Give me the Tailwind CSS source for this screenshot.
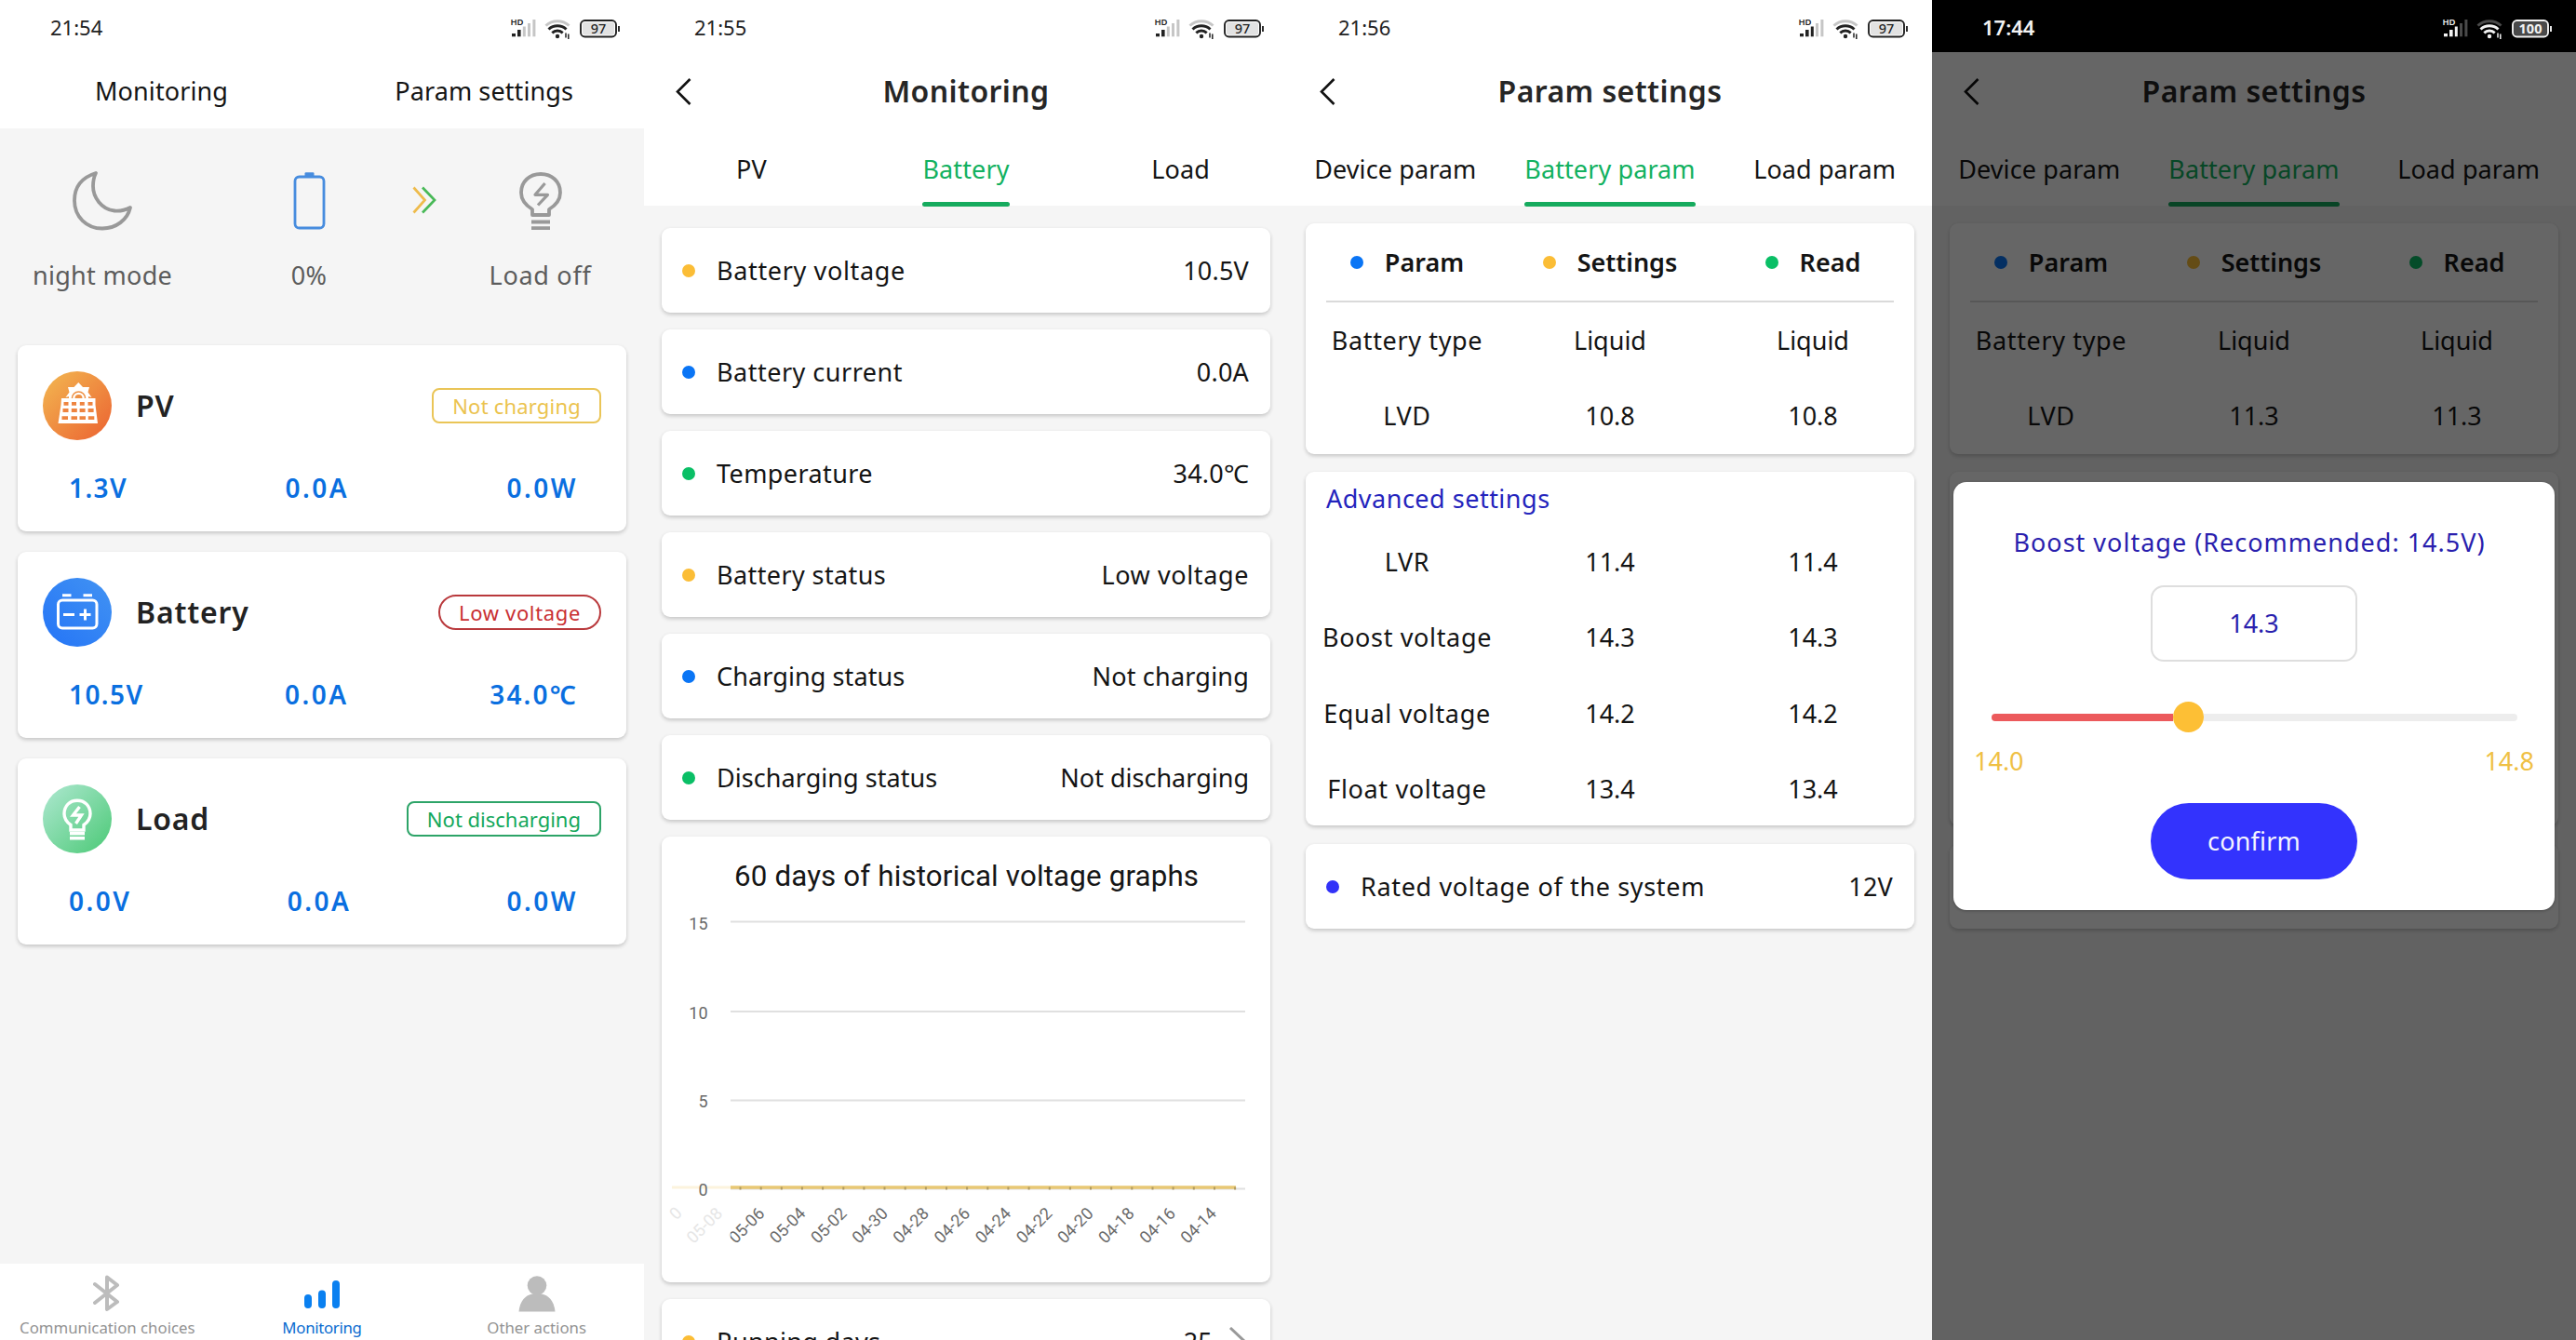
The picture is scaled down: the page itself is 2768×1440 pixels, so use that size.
<!DOCTYPE html>
<html lang="en">
<head>
<meta charset="utf-8">
<title>Solar controller app</title>
<script src="https://cdn.jsdelivr.net/npm/@tailwindcss/browser@4"></script>
</head>
<body class="bg-[#f5f5f5]">
<main id="app" class="grid h-[1440px] w-[2768px] grid-cols-4 overflow-hidden font-['Noto_Sans','Noto_Sans_CJK_SC',sans-serif] text-[27px] leading-9 text-[#141414]"></main>

<script>
/* ---------- shared pieces ---------- */
const statusBar = (time, battery, dark, bars) => {
  const fg = dark ? '#f2f2f2' : '#222', dim = dark ? '#4a4a4a' : '#c6c6c6';
  const signal = [[11, 26, 4], [17, 22, 3.6], [22.8, 18.5, 3], [28, 15, 3], [33.4, 11, 3]]
    .map(([x, y, w], i) => `<rect x="${x}" y="${y}" width="${w}" height="${29.3 - y}" fill="${i < bars ? fg : dim}"/>`).join('');
  return `<div class="flex h-14 shrink-0 items-center justify-between pt-1 pr-[23px] pl-[54px] ${dark ? 'bg-black font-semibold text-[#f2f2f2]' : 'bg-white text-[#222]'}">
    <span class="pb-0.5 text-[22px] leading-8">${time}</span>
    <svg class="h-10 w-[130px]" viewBox="0 0 130 40">
      <text x="9.500" y="16.800" font-size="9.500" font-weight="600" textLength="14" fill="${fg}">HD</text>
      ${signal}
      <g fill="none" stroke-width="3">
        <path d="M47.500 17.500a18.500 18.500 0 0 1 25 0" stroke="${dim}"/>
        <path d="M50.500 21.500a14 14 0 0 1 19 0" stroke="${fg}"/>
        <path d="M54.300 25.300a8.500 8.500 0 0 1 11.400 0" stroke="${fg}"/>
      </g>
      <circle cx="60" cy="29" r="2.200" fill="${fg}"/>
      <path d="M69 25.500v5M71.800 26.500v5.500" stroke="${fg}" stroke-width="1.500"/>
      <rect x="85" y="12" width="38" height="17.500" rx="4.500" fill="${dark ? '#444' : '#fff'}" stroke="${fg}" stroke-width="1.900"/>
      <rect x="87" y="14" width="34" height="13.500" rx="2.500" fill="${dark ? '#4a4a4a' : '#e2e2e2'}"/>
      <path d="M126 18v6" stroke="${fg}" stroke-width="1.900"/>
      <text x="104" y="26" text-anchor="middle" font-size="14.500" font-weight="${dark ? 700 : 500}" fill="${fg}">${battery}</text>
    </svg>
  </div>`;
};

const titleBar = title => `<div class="grid h-[82px] shrink-0 grid-cols-[60px_1fr_60px] items-center bg-white pt-0.5">
    <svg class="ml-[34px] h-[30px] w-[18px]" viewBox="0 0 18 30" fill="none" stroke="#111" stroke-width="2.600"><path d="M15.500 2L2 15.500L15.500 29"/></svg>
    <h1 class="text-center text-[32px] font-semibold tracking-[0.4px] text-[#262626]">${title}</h1>
  </div>`;

const tabs = (items, active) => `<nav class="grid h-[83px] shrink-0 grid-cols-3 justify-items-center bg-white tracking-[0.1px]">
    ${items.map((t, i) => `<span class="flex h-[84px] flex-col justify-between pt-[26px] ${i === active ? 'text-[#12b160]' : ''}">${t}${i === active ? '<i class="block h-[5px] rounded-full bg-[#16ab5e]"></i>' : ''}</span>`).join('')}
  </nav>`;

const card = (cls, body) => `<section class="mx-[19px] shrink-0 rounded-[9px] bg-white shadow-[0_2px_4px_rgba(0,0,0,0.2)] ${cls}">${body}</section>`;

const infoRow = (dot, label, value, spacing = 'tracking-[0.65px]') => `<div class="flex h-[91px] items-center justify-between pr-[23px] pl-[22px]">
    <span class="flex items-center gap-[23px] ${spacing}"><i class="size-[14px] rounded-full ${dot}"></i>${label}</span>
    <span class="flex items-center tracking-[0.2px]">${value}</span>
  </div>`;

const YELLOW = 'bg-[#fbbd36]', BLUE = 'bg-[#0a75f5]', GREEN = 'bg-[#0abf66]', INDIGO = 'bg-[#3232f8]';

/* ---------- screen 1: overview ---------- */
const bulb = `<path d="M572 231V225C564 220 560 214 560 207C560 195 569 187 581 187S602 195 602 207C602 214 598 220 590 225V231ZM571 238.500H591M571 245.200H591" stroke-width="3.800"/><path d="M585.600 197L575 209.300H588.500L578 220.500" stroke-width="3.200"/>`;

const gradient = (id, x1, x2, from, to) => `<linearGradient id="${id}" x1="${x1}" y1="0" x2="${x2}" y2="1"><stop offset=".1" stop-color="${from}"/><stop offset=".9" stop-color="${to}"/></linearGradient><circle cx="37" cy="37" r="37" fill="url(#${id})"/>`;

const icons = {
  pv: `${gradient('gOrange', 0, 1, '#f2b04e', '#ec6a34')}
    <path d="M28 31V27L24.500 28L28.500 22.500L27 17H33.500L38.300 12L43 17H50L48.500 22.500L52.500 28L49 27V31Z" fill="#fff"/>
    <path d="M31.500 29a7 7 0 0 1 14 0" fill="none" stroke="#ee9145" stroke-width="1.600"/>
    <path d="M20 29H56.500V36L59 56H16.500L19.500 36Z" fill="#fff"/>
    <path d="M34.500 29a4 4 0 0 1 8 0Z" fill="#ee9145"/>
    <path d="M22.500 34.800h5M31 34.800h5M39.800 34.800h5M48.500 34.800h5M21.500 42h6M30.800 42h6M39.600 42h6M48.600 42h6M20.500 50.200h6.500M30.500 50.200h6.500M39.500 50.200h6.500M48.800 50.200h6.500" stroke="#ee8440" stroke-width="3.800"/>`,
  battery: `${gradient('gBlue', 1, 0, '#3f90f3', '#2777f6')}<g fill="none" stroke="#fff" stroke-width="3"><rect x="16.500" y="24" width="41.500" height="30" rx="4.500"/><path d="M21 18.700h9.500M43.500 18.700h9.500M22 39.500h12M39.500 39.500h12M45.500 33.500v12"/></g>`,
  load: `${gradient('gGreen', 0, 1, '#a5e5c8', '#55cc7f')}<g fill="none" stroke="#fff" stroke-width="3.400"><path d="M30 49V43.500C25 40 23 36 23 31.500C23 23 29 17.200 37 17.200S51 23 51 31.500C51 36 49 40 44 43.500V49ZM29 52.800H45M29 57.700H45"/><path d="M39.500 24L32.500 33H41.500L35.500 42"/></g>`
};

const reading = v => `<span class="${v[0] === '1' ? 'tracking-[1.4px]' : v[0] === '3' ? 'tracking-[2.200px]' : 'tracking-[2.500px]'}">${v}</span>`;

const deviceCard = (icon, name, badge, badgeCls, values) => card('flex h-[200px] flex-col', `
    <div class="flex h-[130px] items-center px-[27px]">
      <svg class="size-[74px]" viewBox="0 0 74 74">${icon}</svg>
      <h2 class="ml-[26px] text-[32px] font-semibold tracking-[0.8px] text-[#222]">${name}</h2>
      <span class="ml-auto flex h-[38px] items-center border-2 px-5 text-[22px] ${badgeCls}">${badge}</span>
    </div>
    <div class="flex justify-between pt-[5px] pr-[52px] pl-[55px] text-[28px] font-semibold text-[#0a6fe0]">${values.map(reading).join('')}</div>`);

const screen1 = `<div class="flex flex-col overflow-hidden bg-[#f5f5f5]">
  ${statusBar('21:54', '97', false, 2)}
  <nav class="flex h-[82px] shrink-0 items-center justify-between bg-white pt-0.5 pr-[76px] pl-[102px] tracking-[0.1px]"><span>Monitoring</span><span>Param settings</span></nav>
  <div class="grid h-[233px] shrink-0 grid-cols-[220px_224px_25px_223px] justify-items-center pt-11 tracking-[0.3px] text-[#5c5c5c]">
    <div class="flex flex-col items-center gap-[29px]"><svg class="h-[67px] w-[66px]" viewBox="0 0 66 67" fill="none" stroke="#999" stroke-width="3.800" stroke-linejoin="round"><path d="M26 4C10 9 3 20 3 33.500C3 51 16 63.500 33 63.500C48 63.500 60 54 63 41C57 44 50 45 46 44.500C32 43 23 30 23 18C23 12.500 24 8 26 4Z"/></svg><span>night mode</span></div>
    <div class="flex flex-col items-center gap-[29px]"><svg class="h-[67px] w-[36px]" viewBox="0 0 36 67"><rect x="3" y="8" width="31" height="55" rx="4.500" fill="none" stroke="#478cde" stroke-width="2.800"/><path d="M13.500 7V4.500Q13.500 3.300 14.700 3.300H22.300Q23.500 3.300 23.500 4.500V7Z" fill="#478cde"/></svg><span>0%</span></div>
    <svg class="mt-[18px] h-[30px] w-[27px]" viewBox="0 0 27 30" fill="none" stroke-width="2.700"><path d="M1.500 1.500L13.500 15L1.500 28.500" stroke="#eebb4c"/><path d="M11 1.500L24 15L11 28.500" stroke="#48b957"/></svg>
    <div class="flex flex-col items-center gap-[29px] tracking-[0.7px]"><svg class="h-[67px] w-[50px]" viewBox="556 182 50 67" fill="none" stroke="#999" stroke-linejoin="round">${bulb}</svg><span>Load off</span></div>
  </div>
  <div class="flex flex-col gap-[22px]">
    ${deviceCard(icons.pv, 'PV', 'Not charging', 'tracking-[0.2px] rounded-[8px] border-[#eac557] text-[#ebc34f]', ['1.3V', '0.0A', '0.0W'])}
    ${deviceCard(icons.battery, 'Battery', 'Low voltage', 'tracking-[0.65px] rounded-full border-[#b9393c] text-[#c92f33]', ['10.5V', '0.0A', '34.0℃'])}
    ${deviceCard(icons.load, 'Load', 'Not discharging', 'rounded-[8px] border-[#2da468] text-[#14a85c]', ['0.0V', '0.0A', '0.0W'])}
  </div>
  <nav class="mt-auto grid h-[82px] shrink-0 grid-cols-3 justify-items-center bg-white pt-3 text-[16.8px] leading-6 text-[#939393]">
    <span class="flex flex-col items-center gap-[5px]"><svg class="h-10 w-[30px]" viewBox="100 1370 30 40" fill="none" stroke="#bcbcbc" stroke-width="4" stroke-linecap="round" stroke-linejoin="round"><path d="M102 1380L126 1399L115 1407V1372.500L126 1381L102 1400"/></svg>Communication choices</span>
    <span class="flex flex-col items-center gap-[5px] text-[#0a6bd0]"><svg class="h-10 w-10" viewBox="0 0 40 40" stroke="#0a80f0" stroke-width="8" stroke-linecap="round"><path d="M5 25V32M20 20.500V32M35 10V32"/></svg><span class="tracking-[-0.3px]">Monitoring</span></span>
    <span class="flex flex-col items-center gap-[5px]"><svg class="h-10 w-10" viewBox="0 0 40 40" fill="#bcbcbc"><circle cx="20" cy="11.500" r="10.300"/><path d="M.5 39.500C1.500 28 8 21.500 15 20.500H25C32 21.500 38.500 28 39.500 39.500Z"/></svg>Other actions</span>
  </nav>
</div>`;

/* ---------- screen 2: battery monitoring ---------- */
const days = ['05-06', '05-04', '05-02', '04-30', '04-28', '04-26', '04-24', '04-22', '04-20', '04-18', '04-16', '04-14'];
const dayLabel = (t, x) => `<text transform="translate(${x} 1317) rotate(-45)" y="6" text-anchor="middle">${t}</text>`;
const chart = `<svg class="block h-[479px] w-[654px]" viewBox="19 899 654 479" font-family="Roboto" font-size="18" fill="#6a6a6a">
    <text x="346.500" y="951.500" text-anchor="middle" font-size="31.300" fill="#161616" textLength="499">60 days of historical voltage graphs</text>
    <path d="M93 990.500H646M93 1087H646M93 1182.500H646M93 1277.500H646" stroke="#e0e0e0" stroke-width="2"/>
    <path d="M30 1276H93" stroke="#fcf3dd" stroke-width="3"/>
    <path d="M93 1276H636" stroke="#e8c874" stroke-width="3.600"/>
    <g fill="#b09a60">${Array.from({ length: 25 }, (_, i) => `<rect x="${(102.500 + i * 22.15).toFixed(1)}" y="1275.500" width="2" height="3"/>`).join('')}</g>
    ${[[15, 999], [10, 1095], [5, 1190], [0, 1285]].map(([v, y]) => `<text x="68.500" y="${y}" text-anchor="end">${v}</text>`).join('')}
    ${days.map((d, i) => dayLabel(d, (110.3 + i * 44.15).toFixed(1))).join('')}
    <path d="M80 1290H93V1345H80Z" fill="#fff" fill-opacity=".75"/>
    <g fill="#e6e6e6">${dayLabel('05-08', 65)}<text transform="translate(34 1304) rotate(-45)" y="6" text-anchor="middle">0</text></g>
  </svg>`;

const screen2 = `<div class="flex flex-col overflow-hidden bg-[#f5f5f5]">
  ${statusBar('21:55', '97', false, 2)}
  ${titleBar('Monitoring')}
  ${tabs(['PV', 'Battery', 'Load'], 1)}
  <div class="flex flex-col gap-[18px] pt-6">
    ${card('', infoRow(YELLOW, 'Battery voltage', '10.5V'))}
    ${card('', infoRow(BLUE, 'Battery current', '0.0A', 'tracking-[0.5px]'))}
    ${card('', infoRow(GREEN, 'Temperature', '34.0℃', 'tracking-[0.4px]'))}
    ${card('', infoRow(YELLOW, 'Battery status', '<span class="tracking-[0.600px]">Low voltage</span>', 'tracking-[0.4px]'))}
    ${card('', infoRow(BLUE, 'Charging status', 'Not charging', 'tracking-[0.1px]'))}
    ${card('', infoRow(GREEN, 'Discharging status', '<span class="tracking-[0px]">Not discharging</span>', 'tracking-[0.05px]'))}
    ${card('', chart)}
    ${card('', infoRow(YELLOW, 'Running days', '25<svg class="ml-[17px] h-8 w-[22px]" viewBox="0 0 22 32" fill="none" stroke="#999" stroke-width="3"><path d="M2 1L18 16L2 31"/></svg>', 'tracking-[0.3px]'))}
  </div>
</div>`;

/* ---------- screens 3 and 4: battery parameters ---------- */
const headCell = (dot, t) => `<span class="flex items-center gap-[23px]"><i class="size-[14px] rounded-full ${dot}"></i>${t}</span>`;
const paramRow = (name, set, read) => `<div class="grid h-[81.5px] grid-cols-3 items-center justify-items-center"><span class="tracking-[0.65px]">${name}</span><span>${set}</span><span>${read}</span></div>`;

const paramBody = lvd => `${titleBar('Param settings')}
  ${tabs(['Device param', 'Battery param', 'Load param'], 1)}
  <div class="flex flex-col pt-[19px]">
    ${card('h-[248px]', `
      <div class="grid h-[83px] grid-cols-3 items-center justify-items-center pt-px font-semibold">${headCell(BLUE, 'Param')}${headCell(YELLOW, 'Settings')}${headCell(GREEN, 'Read')}</div>
      <hr class="mx-[22px] border-t-2 border-[#dadada]">
      ${paramRow('Battery type', 'Liquid', 'Liquid')}
      ${paramRow('LVD', lvd, lvd)}`)}
    ${card('mt-[19px] h-[380px]', `
      <h3 class="pt-[11px] pl-[22px] tracking-[0.5px] text-[#2424bd]">Advanced settings</h3>
      <div class="pt-[9px]">
        ${paramRow('LVR', '11.4', '11.4')}
        ${paramRow('Boost voltage', '14.3', '14.3')}
        ${paramRow('Equal voltage', '14.2', '14.2')}
        ${paramRow('Float voltage', '13.4', '13.4')}
      </div>`)}
    ${card('mt-5', infoRow(INDIGO, 'Rated voltage of the system', '12V'))}
  </div>`;

const screen3 = `<div class="flex flex-col overflow-hidden bg-[#f5f5f5]">${statusBar('21:56', '97', false, 3)}${paramBody('10.8')}</div>`;

const modal = `<div class="absolute top-[518px] left-[23px] flex h-[460px] w-[646px] flex-col items-center rounded-[14px] bg-white shadow-[0_1px_3px_rgba(0,0,0,0.3)]">
    <p class="mt-[47px] mr-2.5 tracking-[1px] whitespace-nowrap text-[#2a1fae]">Boost voltage (Recommended: 14.5V)</p>
    <div class="mt-[28px] flex h-[82px] w-[222px] items-center justify-center rounded-[14px] border-2 border-[#dedede] text-[#2a1fae]">14.3</div>
    <div class="mt-[43px] flex h-[33px] w-[565px] items-center">
      <div class="h-2 rounded-l-full bg-[#ec5a5c]" style="width:195px"></div>
      <i class="size-[33px] shrink-0 rounded-full bg-[#fdbf35]"></i>
      <div class="h-2 grow rounded-r-full bg-[#ededed]"></div>
    </div>
    <div class="mt-[13px] flex w-full justify-between px-[22px] text-[#efc044]"><span>14.0</span><span>14.8</span></div>
    <button class="mt-[27px] h-[82px] w-[222px] rounded-full bg-[#3333fd] tracking-[0.2px] text-[#f4f4ff]">confirm</button>
  </div>`;

const screen4 = `<div class="relative flex flex-col overflow-hidden bg-[#f5f5f5]">${statusBar('17:44', '100', true, 3)}${paramBody('11.3')}
  <div class="absolute inset-x-0 top-14 bottom-0 bg-black/60"></div>${modal}</div>`;

document.getElementById('app').innerHTML = screen1 + screen2 + screen3 + screen4;
</script>
</body>
</html>
